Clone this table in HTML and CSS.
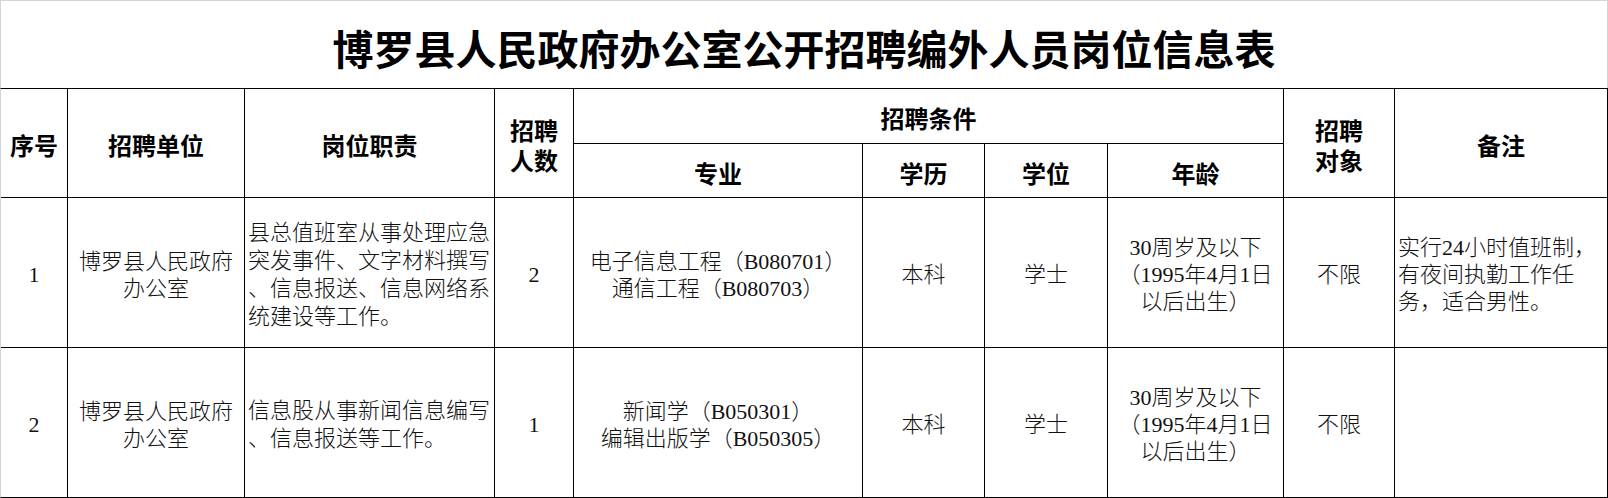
FILE: index.html
```html
<!DOCTYPE html>
<html lang="zh-CN">
<head>
<meta charset="utf-8">
<title>博罗县人民政府办公室公开招聘编外人员岗位信息表</title>
<link rel="stylesheet" href="styles.css">
</head>
<body>
<div class="sheet">
  <div class="title">博罗县人民政府办公室公开招聘编外人员岗位信息表</div>
  <div class="grid">
    <div class="cell hd r2">序号</div>
    <div class="cell hd r2">招聘单位</div>
    <div class="cell hd r2">岗位职责</div>
    <div class="cell hd r2">招聘<br>人数</div>
    <div class="cell hd c4">招聘条件</div>
    <div class="cell hd r2">招聘<br>对象</div>
    <div class="cell hd r2">备注</div>
    <div class="cell hd">专业</div>
    <div class="cell hd">学历</div>
    <div class="cell hd">学位</div>
    <div class="cell hd">年龄</div>

    <div class="cell">1</div>
    <div class="cell">博罗县人民政府<br>办公室</div>
    <div class="cell left lh28">县总值班室从事处理应急<br>突发事件、文字材料撰写<br>、信息报送、信息网络系<br>统建设等工作。</div>
    <div class="cell">2</div>
    <div class="cell">电子信息工程（B080701）<br>通信工程（B080703）</div>
    <div class="cell">本科</div>
    <div class="cell">学士</div>
    <div class="cell">30周岁及以下<br>（1995年4月1日<br>以后出生）</div>
    <div class="cell">不限</div>
    <div class="cell left">实行24小时值班制，<br>有夜间执勤工作任<br>务，适合男性。</div>

    <div class="cell">2</div>
    <div class="cell">博罗县人民政府<br>办公室</div>
    <div class="cell left lh28">信息股从事新闻信息编写<br>、信息报送等工作。</div>
    <div class="cell">1</div>
    <div class="cell">新闻学（B050301）<br>编辑出版学（B050305）</div>
    <div class="cell">本科</div>
    <div class="cell">学士</div>
    <div class="cell">30周岁及以下<br>（1995年4月1日<br>以后出生）</div>
    <div class="cell">不限</div>
    <div class="cell left"></div>
  </div>
</div>
</body>
</html>
```
FILE: styles.css
```css
html, body {
  margin: 0;
  padding: 0;
  background: #fff;
}

body {
  width: 1608px;
  height: 498px;
  overflow: hidden;
  font-family: "Liberation Serif", "Noto Sans CJK SC", serif;
  color: #000;
}

.sheet {
  width: 1608px;
}

.title {
  box-sizing: border-box;
  width: 1608px;
  height: 88px;
  border: 1px solid #d4d4d4;
  border-bottom: 0;
  display: flex;
  align-items: center;
  justify-content: center;
  padding-top: 4px;
  font-family: "Noto Sans CJK SC", sans-serif;
  font-weight: 700;
  font-size: 41px;
  letter-spacing: 0;
}

.grid {
  box-sizing: border-box;
  width: 1608px;
  display: grid;
  grid-template-columns: 66px 176px 249px 78px 288px 121px 122px 175px 110px 212px;
  grid-template-rows: 54px 53px 149px 149px;
  gap: 1px;
  background: #000;
  border-left: 1px solid #d4d4d4;
  border-right: 1px solid #000;
  border-top: 1px solid #000;
  border-bottom: 1px solid #000;
}

.cell {
  background: #fff;
  display: flex;
  align-items: center;
  justify-content: center;
  text-align: center;
  padding-top: 4px;
  box-sizing: border-box;
  font-size: 22px;
  line-height: 27px;
  font-weight: 300;
  color: #111;
}

.hd {
  font-family: "Noto Sans CJK SC", sans-serif;
  font-weight: 700;
  font-size: 24px;
  line-height: 30px;
  color: #000;
}

.r2 {
  grid-row: span 2;
}

.c4 {
  grid-column: span 4;
}

.left {
  justify-content: flex-start;
  text-align: left;
  padding-left: 3px;
}

.lh28 {
  line-height: 28px;
}
```
